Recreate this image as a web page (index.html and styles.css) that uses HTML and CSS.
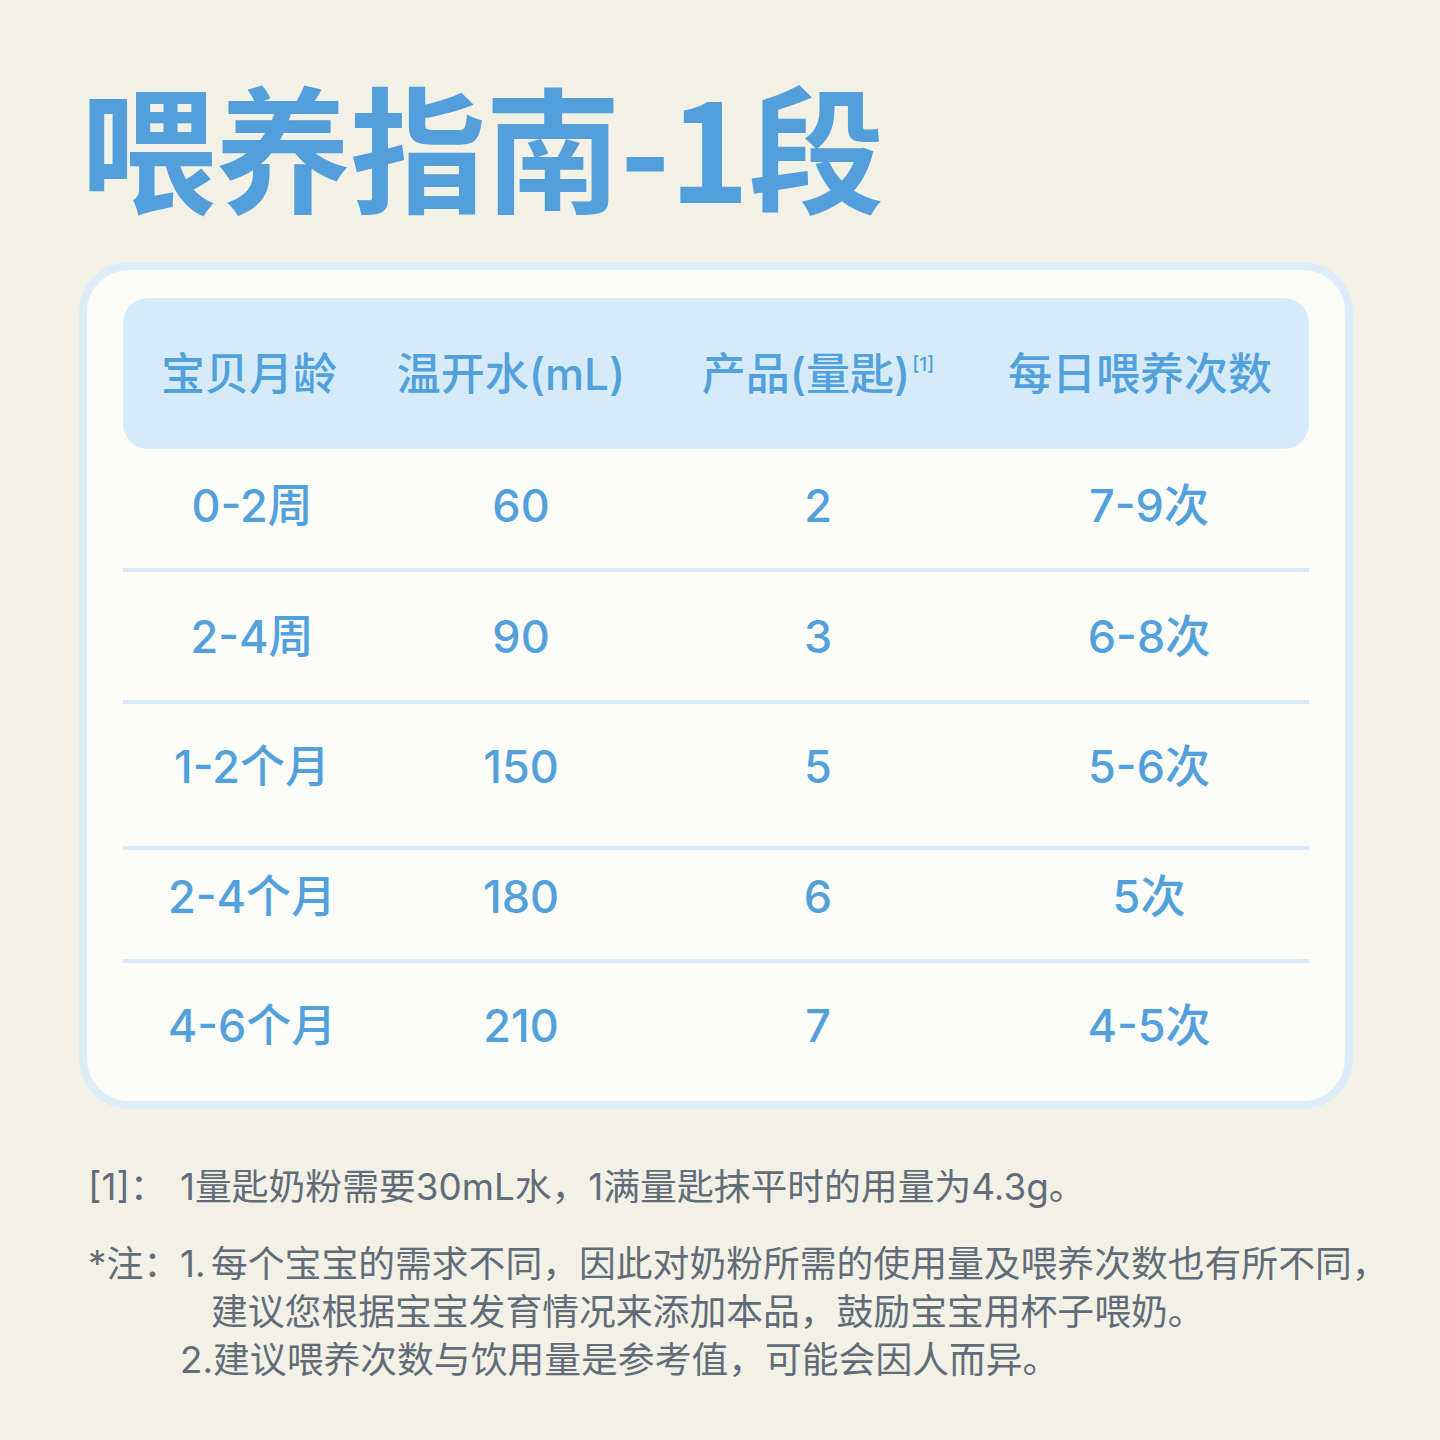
FILE: index.html
```html
<!DOCTYPE html>
<html lang="zh-CN">
<head>
<meta charset="utf-8">
<title>喂养指南-1段</title>
<link rel="stylesheet" href="styles.css">
</head>
<body>
<main class="page">
  <h1 class="title">喂养指南-1段</h1>
  <section class="card">
    <div class="thead">
      <div class="cell">宝贝月龄</div>
      <div class="cell">温开水(mL)</div>
      <div class="cell">产品(量匙)<sup class="ref">[1]</sup></div>
      <div class="cell">每日喂养次数</div>
    </div>
    <div class="row">
      <div class="cell">0-2周</div>
      <div class="cell">60</div>
      <div class="cell">2</div>
      <div class="cell">7-9次</div>
    </div>
    <div class="row">
      <div class="cell">2-4周</div>
      <div class="cell">90</div>
      <div class="cell">3</div>
      <div class="cell">6-8次</div>
    </div>
    <div class="row">
      <div class="cell">1-2个月</div>
      <div class="cell">150</div>
      <div class="cell">5</div>
      <div class="cell">5-6次</div>
    </div>
    <div class="row">
      <div class="cell">2-4个月</div>
      <div class="cell">180</div>
      <div class="cell">6</div>
      <div class="cell">5次</div>
    </div>
    <div class="row">
      <div class="cell">4-6个月</div>
      <div class="cell">210</div>
      <div class="cell">7</div>
      <div class="cell">4-5次</div>
    </div>
  </section>
  <section class="notes">
    <div class="note first">
      <span class="label">[1]：</span>
      <span class="text">1量匙奶粉需要30mL水，1满量匙抹平时的用量为4.3g。</span>
    </div>
    <div class="note">
      <span class="label">*注：</span>
      <div class="items">
        <div class="item">
          <span class="num">1.</span>
          <div class="lines">
            <span class="line">每个宝宝的需求不同，因此对奶粉所需的使用量及喂养次数也有所不同，</span>
            <span class="line">建议您根据宝宝发育情况来添加本品，鼓励宝宝用杯子喂奶。</span>
          </div>
        </div>
        <div class="item">
          <span class="num">2.</span>
          <div class="lines">
            <span class="line">建议喂养次数与饮用量是参考值，可能会因人而异。</span>
          </div>
        </div>
      </div>
    </div>
  </section>
</main>
</body>
</html>
```

FILE: styles.css
```css
* { box-sizing: border-box; }

html, body {
  margin: 0;
  padding: 0;
  background: #f3f1e6;
}

body {
  width: 1440px;
  min-height: 1440px;
  font-family: "Noto Sans CJK SC", sans-serif;
}

.page {
  padding: 0;
}

.title {
  margin: 76px 0 0 80px;
  font-family: "Noto Sans CJK SC", sans-serif;
  font-weight: 700;
  font-size: 136px;
  line-height: 136px;
  height: 136px;
  color: #529fdc;
  letter-spacing: -1px;
  white-space: nowrap;
}

.card {
  margin: 50px 0 0 79px;
  width: 1274px;
  height: 847px;
  border: 8px solid #dcedf7;
  border-radius: 50px;
  background: #fcfcf8;
  padding: 28px 36px 0 36px;
}

.thead,
.row {
  display: grid;
  grid-template-columns: 258px 274px 326px 328px;
  color: #52a0dc;
}

.thead {
  height: 151px;
  background: #d5ebf9;
  border-radius: 25px;
  align-items: center;
  font-family: "Inter", "Noto Sans CJK SC", sans-serif;
  font-size: 44px;
  font-weight: 500;
  line-height: 56px;
}

.cell {
  text-align: center;
  white-space: nowrap;
}

.thead .cell:first-child { padding-right: 6px; }
.thead .cell:nth-child(2) { padding-right: 14px; }
.thead .cell:nth-child(4) { padding-right: 10px; }

.ref {
  font-family: "Inter", sans-serif;
  font-size: 19px;
  font-weight: 500;
  line-height: 0;
  vertical-align: 19px;
  margin-left: 2px;
}

.row {
  font-family: "Inter", "Noto Sans CJK SC", sans-serif;
  font-size: 45px;
  font-weight: 500;
  line-height: 56px;
  align-items: start;
  border-bottom: 4px solid #d8e9fa;
}

.row:nth-of-type(2) { height: 123px; padding-top: 29px; }
.row:nth-of-type(3) { height: 132px; padding-top: 37px; }
.row:nth-of-type(4) { height: 146px; padding-top: 35px; }
.row:nth-of-type(5) { height: 113px; padding-top: 19px; }
.row:nth-of-type(6) { padding-top: 35px; border-bottom: none; }

.row .cell:nth-child(2) { padding-left: 6px; }
.row .cell:nth-child(4) { padding-left: 8px; }

.notes {
  margin: 54px 0 0 88px;
  font-family: "Inter", "Noto Sans CJK SC", sans-serif;
  font-size: 36.8px;
  line-height: 48px;
  color: #626c79;
}

.note {
  display: flex;
  align-items: flex-start;
}

.note.first {
  margin-bottom: 29px;
}

.label {
  flex: 0 0 92px;
  white-space: nowrap;
}

.items {
  display: flex;
  flex-direction: column;
}

.item {
  display: flex;
  align-items: flex-start;
}

.num {
  flex: 0 0 31px;
}

.lines {
  display: flex;
  flex-direction: column;
}

.line,
.text {
  display: block;
  height: 48px;
  white-space: nowrap;
}
```
